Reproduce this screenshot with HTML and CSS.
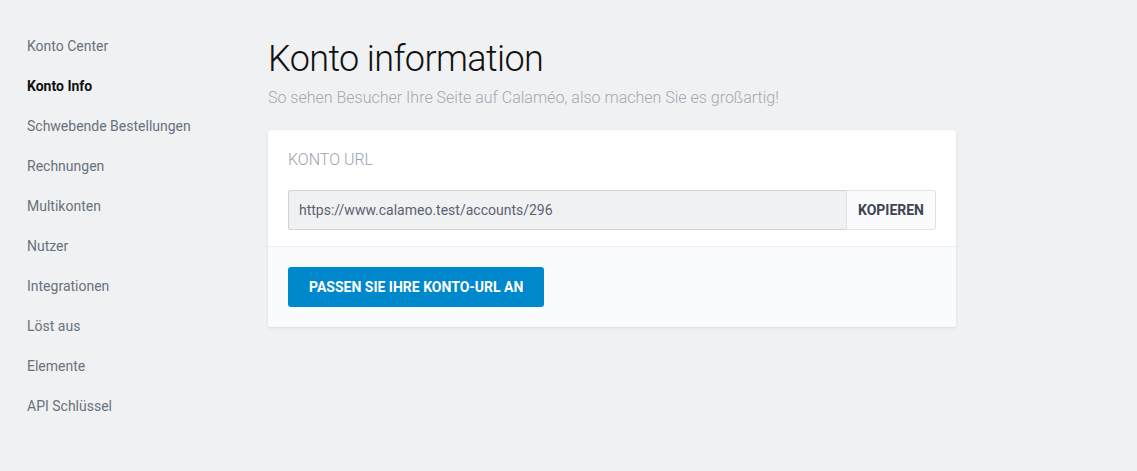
FILE: index.html
```html
<!DOCTYPE html>
<html lang="de">
<head>
    <meta charset="UTF-8">
    <meta name="viewport" content="width=device-width, initial-scale=1.0">
    <title>Konto information</title>
    <link rel="stylesheet" href="styles.css">
</head>
<body>
    <div class="page">
        <nav class="sidebar">
            <a class="nav-item" href="#">Konto Center</a>
            <a class="nav-item active" href="#">Konto Info</a>
            <a class="nav-item" href="#">Schwebende Bestellungen</a>
            <a class="nav-item" href="#">Rechnungen</a>
            <a class="nav-item" href="#">Multikonten</a>
            <a class="nav-item" href="#">Nutzer</a>
            <a class="nav-item" href="#">Integrationen</a>
            <a class="nav-item" href="#">Löst aus</a>
            <a class="nav-item" href="#">Elemente</a>
            <a class="nav-item" href="#">API Schlüssel</a>
        </nav>
        <main class="content">
            <h1 class="title">Konto information</h1>
            <p class="subtitle">So sehen Besucher Ihre Seite auf Calaméo, also machen Sie es großartig!</p>
            <div class="card">
                <div class="card-body">
                    <h2 class="card-title">KONTO URL</h2>
                    <div class="url-group">
                        <input class="url-input" type="text" value="https://www.calameo.test/accounts/296" readonly>
                        <button class="copy-button">KOPIEREN</button>
                    </div>
                </div>
                <div class="card-footer">
                    <button class="primary-button">PASSEN SIE IHRE KONTO-URL AN</button>
                </div>
            </div>
        </main>
    </div>
</body>
</html>
```

FILE: styles.css
```css
body {
    margin: 0;
    background-color: #f0f1f3;
    font-family: Roboto, Arial, sans-serif;
    color: #4a5360;
}

.page {
    display: flex;
    padding-top: 26px;
}

.sidebar {
    display: flex;
    flex-direction: column;
    width: 268px;
    padding-left: 27px;
    box-sizing: border-box;
    flex-shrink: 0;
}

.nav-item {
    display: block;
    height: 40px;
    line-height: 40px;
    font-size: 14px;
    color: #68717c;
    text-decoration: none;
}

.nav-item.active {
    color: #111;
    font-weight: 700;
}

.content {
    width: 688px;
}

.title {
    margin: 11px 0 0 0;
    font-size: 36px;
    font-weight: 300;
    line-height: 44px;
    color: #111;
    letter-spacing: -0.6px;
}

.subtitle {
    margin: 7px 0 0 0;
    font-size: 16px;
    font-weight: 300;
    line-height: 20px;
    color: #a2a9b2;
}

.card {
    margin-top: 22px;
    background-color: #fff;
    border-radius: 3px;
    box-shadow: 0 1px 3px rgba(0, 0, 0, 0.1);
    overflow: hidden;
}

.card-body {
    padding: 20px 20px 16px 20px;
    border-bottom: 1px solid #eceef1;
}

.card-title {
    margin: 0 0 20px 0;
    font-size: 16px;
    font-weight: 300;
    line-height: 20px;
    color: #9aa3ad;
}

.url-group {
    display: flex;
    height: 40px;
}

.url-input {
    flex: 1;
    box-sizing: border-box;
    height: 40px;
    padding: 0 10px;
    border: 1px solid #cfd3d8;
    border-right: none;
    border-radius: 3px 0 0 3px;
    background-color: #f0f1f3;
    font-family: Roboto, Arial, sans-serif;
    font-size: 14px;
    color: #5a636f;
    outline: none;
}

.copy-button {
    box-sizing: border-box;
    height: 40px;
    padding: 0 11px;
    border: 1px solid #dfe3e8;
    border-radius: 0 3px 3px 0;
    background-color: #fafbfd;
    font-family: Roboto, Arial, sans-serif;
    font-size: 14px;
    font-weight: 700;
    color: #3d4550;
    cursor: pointer;
}

.card-footer {
    padding: 20px;
    background-color: #fafbfd;
}

.primary-button {
    height: 40px;
    padding: 0 21px;
    border: none;
    border-radius: 3px;
    background-color: #0088cc;
    font-family: Roboto, Arial, sans-serif;
    font-size: 14px;
    font-weight: 700;
    color: #fff;
    cursor: pointer;
}
```
